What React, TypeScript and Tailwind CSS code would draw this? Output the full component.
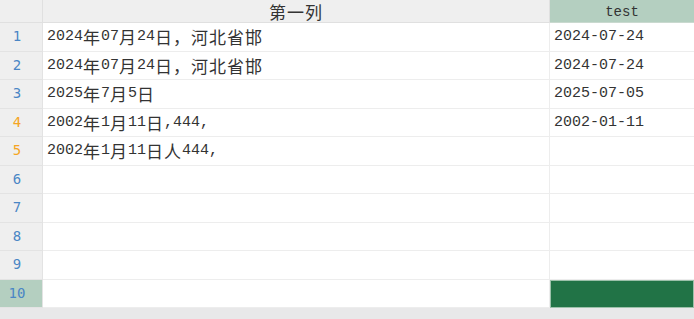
import React from "react";

const rows: { n: number; a: string; b: string; warn?: boolean }[] = [
  { n: 1, a: "2024年07月24日，河北省邯", b: "2024-07-24" },
  { n: 2, a: "2024年07月24日，河北省邯", b: "2024-07-24" },
  { n: 3, a: "2025年7月5日", b: "2025-07-05" },
  { n: 4, a: "2002年1月11日,444,", b: "2002-01-11", warn: true },
  { n: 5, a: "2002年1月11日人444,", b: "", warn: true },
  { n: 6, a: "", b: "" },
  { n: 7, a: "", b: "" },
  { n: 8, a: "", b: "" },
  { n: 9, a: "", b: "" },
  { n: 10, a: "", b: "" },
];

// ascii runs get a half-width mono face, CJK stays full width
const Mixed = ({ text }: { text: string }) => (
  <>
    {text.split(/([\x00-\x7f]+)/).filter(Boolean).map((part, i) =>
      /^[\x00-\x7f]+$/.test(part) ? (
        <span key={i} className="font-['Liberation_Mono',monospace] text-[15px]">
          {part}
        </span>
      ) : (
        <span key={i} className="font-['Noto_Sans_CJK_SC',sans-serif] text-[17px] tracking-[1px]">
          {part}
        </span>
      )
    )}
  </>
);

const App = () => {
  return (
    <div className="w-[694px] h-[319px] overflow-hidden bg-[#e8e8e9] text-[#333]">
      <div className="grid grid-cols-[43px_507px_144px] bg-white">
        {/* header */}
        <div className="h-[23px] bg-[#efefef] border-r border-b border-[#e0e0e0]" />
        <div className="h-[23px] bg-[#efefef] border-r border-b border-[#e0e0e0] flex items-center justify-center font-['Noto_Sans_CJK_SC',sans-serif] text-[17px] leading-none tracking-[1px]">
          第一列
        </div>
        <div className="h-[23px] bg-[#b4cfc0] border-b border-[#c9d9cf] flex items-center justify-center pt-[1px] font-['Liberation_Mono',monospace] text-[14px] leading-none">
          test
        </div>

        {rows.map((r) => {
          const last = r.n === 10;
          return (
            <React.Fragment key={r.n}>
              <div
                className={`h-[28.5px] border-r border-b border-[#e3e3e3] flex items-center justify-center pr-[8px] font-['DejaVu_Sans_Mono',monospace] text-[14px] ${
                  last ? "bg-[#b4cfc0]" : "bg-[#efefef]"
                } ${r.warn ? "text-[#f5a524]" : "text-[#4a86c5]"}`}
              >
                {r.n}
              </div>
              <div className="h-[28.5px] border-r border-b border-[#ededed] flex items-center pl-[4px] whitespace-nowrap leading-none">
                <Mixed text={r.a} />
              </div>
              <div
                className={`h-[28.5px] border-b flex items-center pl-[4px] whitespace-nowrap leading-none ${
                  last ? "bg-[#217346] border border-[#9cc1aa]" : "border-[#ededed]"
                }`}
              >
                <Mixed text={r.b} />
              </div>
            </React.Fragment>
          );
        })}
      </div>
    </div>
  );
};

export default App;
